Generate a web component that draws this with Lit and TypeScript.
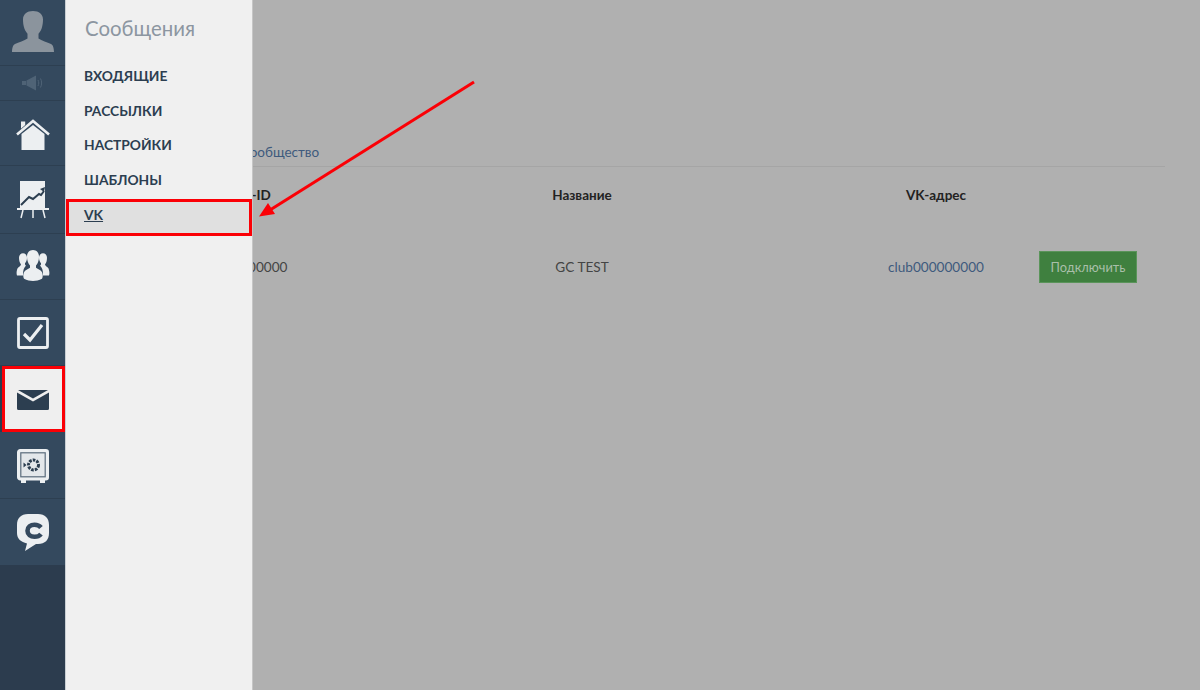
import { LitElement, html, css, svg } from "lit";
import { customElement } from "lit/decorators.js";

const FONT_ICON = {
  avatar: svg`<svg width="44" height="41" viewBox="0 0 44 44" preserveAspectRatio="none"><path fill="#8b949d" d="M22 0c-6 0-10 3.500-10 9 0 3 .4 6 1 8.500.5 2.500 2 5 3.500 7v5c-3 2.500-9 4-12.500 6-2 1.300-2.800 3.500-3 8.500h42c-.2-5-1-7.200-3-8.500-3.500-2-9.500-3.500-12.500-6v-5c1.500-2 3-4.500 3.500-7 .6-2.500 1-5.500 1-8.500 0-5.500-4-9-10-9z"/></svg>`,
  speaker: svg`<svg width="22" height="16" viewBox="0 0 22 16"><path fill="#4f6376" d="M0 6h4v4H0zM4.500 5.500 14 .5v15l-9.500-5z"/><path fill="none" stroke="#4f6376" d="M16 5c1 2 1 4 0 6M18.500 3.500c1.500 3 1.500 6 0 9"/></svg>`,
  home: svg`<svg width="34" height="32" viewBox="0 0 34 32"><path fill="#eceff1" d="M5.500 15 17 6l11.500 9v16h-23z"/><path fill="#eceff1" d="M5 2.500h4.200v3.500L5 9.800z"/><path fill="none" stroke="#eceff1" stroke-width="2.600" d="M1 15.500 17 2l16 13.500"/></svg>`,
  chart: svg`<svg width="34" height="38" viewBox="0 0 34 38"><rect x="4" y="0" width="25" height="27" fill="#eceff1"/><path fill="none" stroke="#2c3e50" stroke-width="2" d="M5 24l8-8 4 2 6-5 2 1 3-4"/><path fill="#2c3e50" d="M29 6l-1 5-4-3z"/><path fill="#eceff1" d="M1 27h32v2H1z"/><path fill="none" stroke="#eceff1" stroke-width="1.500" d="M7 29l-2 8M17 29v8M27 29l2 8"/></svg>`,
  people: svg`<svg width="34" height="31" viewBox="0 0 34 28" preserveAspectRatio="none"><path fill="#eceff1" d="M7 3a4 4 0 0 1 4 4c0 2-1 4-2 5 0 1 0 2 1 2-2 2-3 4-3 8v1H1c-1-2 0-6 1-7 1-1 3-2 3-3-1-1-2-3-2-6a4 4 0 0 1 4-4zM27 3a4 4 0 0 0-4 4c0 2 1 4 2 5 0 1 0 2-1 2 2 2 3 4 3 8v1h6c1-2 0-6-1-7-1-1-3-2-3-3 1-1 2-3 2-6a4 4 0 0 0-4-4z"/><path fill="#eceff1" d="M17 0c4 0 6 3 6 6 0 3-1 6-3 8v2c2 1.500 5 2 6 4 1 2 1 4 0 6-3 1.500-6 2-9 2s-6-.5-9-2c-1-2-1-4 0-6 1-2 4-2.500 6-4v-2c-2-2-3-5-3-8 0-3 2-6 6-6z"/></svg>`,
  check: svg`<svg width="32" height="32" viewBox="0 0 32 32"><rect x="1.500" y="1.500" width="29" height="29" rx="1.500" fill="none" stroke="#eceff1" stroke-width="2.800"/><path fill="none" stroke="#eceff1" stroke-width="3.200" d="M7 17l6 6L25 8"/></svg>`,
  mail: svg`<svg width="32" height="20" viewBox="0 0 32 20"><path fill="#2c3e50" d="M1 0h30l-15 8.500zM0 2.500l16 9 16-9V18.500a1.500 1.500 0 0 1-1.500 1.500H1.500A1.500 1.500 0 0 1 0 18.500z"/></svg>`,
  safe: svg`<svg width="32" height="34" viewBox="0 0 32 34"><rect x="1.200" y="1.200" width="29.600" height="29" rx="2" fill="#eceff1" stroke="#eceff1" stroke-width="2.400"/><rect x="3.800" y="3.800" width="24.400" height="24" fill="#e3e7ea" stroke="#5a6b7c" stroke-width="1.200"/><circle cx="16.500" cy="16" r="5" fill="none" stroke="#2c3e50" stroke-width="3" stroke-dasharray="2.600 1.100"/><path fill="#2c3e50" d="M6.500 13.500l3 2.500-3 2.500z"/><path fill="#eceff1" d="M4 31h5v3H4zM23 31h5v3h-5z"/></svg>`,
  chat: svg`<svg width="32" height="37" viewBox="0 0 32 37"><path fill="#eceff1" d="M11 0h10c7 0 11 4 11 11v8c0 7-4 11-11 11h-2l-11 7 2-7.500C4 28 0 25 0 19v-8C0 4 4 0 11 0z"/><path fill="none" stroke="#34495e" stroke-width="4.600" d="M24 13.500c-1.500-1.800-3.800-2.700-6.500-2.700-3.900 0-7 2.100-7 6s3.100 6 7 6c2.700 0 5-.9 6.500-2.700"/></svg>`,
};

@customElement("app-root")
export class AppRoot extends LitElement {
  static styles = css`
    :host {
      display: block;
      position: relative;
      width: 1200px;
      height: 690px;
      overflow: hidden;
      font-family: "Lato", "Open Sans", sans-serif;
      background: #b0b0b0;
    }
    .page { display: flex; height: 100%; }
    .rail {
      flex: 0 0 65px;
      display: flex;
      flex-direction: column;
      background: #2c3c4e;
    }
    .rail-item {
      display: flex;
      align-items: center;
      justify-content: center;
      background: #34495e;
      border-bottom: 1px solid #2d3f51;
      box-sizing: border-box;
    }
    .h-avatar { height: 66px; align-items: flex-end; padding-bottom: 13px; }
    .h-speaker { height: 35px; }
    .h-home { height: 65px; padding-top: 3px; }
    .h-chart { height: 68px; }
    .h-people { height: 66px; padding-bottom: 2px; }
    .h-check { height: 66px; }
    .h-mail { height: 66px; background: #efefef; border: 3px solid #fb0006; margin-left: 2px; padding-top: 1px; padding-right: 1px; }
    .h-safe { height: 67px; padding-top: 2px; }
    .h-chat { height: 66px; border-bottom: 0; }
    .main {
      flex: 1;
      padding: 144px 35px 0 108px;
      color: #252525;
      font-size: 14px;
    }
    .tabs {
      height: 22px;
      border-bottom: 1px solid #a5a5a5;
      color: #3e5a7d;
      font-size: 13.500px;
      line-height: 16px;
      margin-left: -12px;
    }
    .grid {
      display: grid;
      grid-template-columns: 158px 502px 206px 126px;
      align-items: center;
      justify-items: center;
    }
    .th { font-weight: 700; font-size: 13.500px; height: 56px; line-height: 56px; color: #222; }
    .td { height: 88px; line-height: 88px; color: #444; font-size: 13.600px; }
    .td.link { color: #3e5a7d; }
    .btn {
      justify-self: start;
      width: 98px;
      height: 32px;
      box-sizing: border-box;
      background: #3f803f;
      border: 1px solid #5a945a;
      color: #a9bfa9;
      font-size: 12.800px;
      line-height: 30px;
      text-align: center;
    }
    .panel {
      position: absolute;
      left: 65px;
      top: 0;
      bottom: 0;
      width: 186px;
      background: #f0f0f0;
      border-left: 1px solid #c8ced3;
      border-right: 1px solid #c6c6c6;
    }
    .panel h2 {
      margin: 0;
      padding: 16px 0 0 19px;
      height: 43px;
      font-size: 20.400px;
      line-height: 25px;
      font-weight: 400;
      color: #8c96a1;
    }
    .menu { display: flex; flex-direction: column; }
    .menu a {
      height: 34.500px;
      padding-left: 18px;
      font-size: 13.800px;
      line-height: 34px;
      font-weight: 700;
      color: #2c3e50;
    }
    .menu a.vk {
      margin-top: 2px;
      height: 37px;
      line-height: 25px;
      background: #e0e0e0;
      border: 3px solid #fb0006;
      box-sizing: border-box;
      padding-left: 15px;
      text-decoration: underline;
    }
    .arrow { position: absolute; left: 0; top: 0; pointer-events: none; }
  `;

  render() {
    return html`
      <div class="page">
        <nav class="rail">
          <div class="rail-item h-avatar">${FONT_ICON.avatar}</div>
          <div class="rail-item h-speaker">${FONT_ICON.speaker}</div>
          <div class="rail-item h-home">${FONT_ICON.home}</div>
          <div class="rail-item h-chart">${FONT_ICON.chart}</div>
          <div class="rail-item h-people">${FONT_ICON.people}</div>
          <div class="rail-item h-check">${FONT_ICON.check}</div>
          <div class="rail-item h-mail">${FONT_ICON.mail}</div>
          <div class="rail-item h-safe">${FONT_ICON.safe}</div>
          <div class="rail-item h-chat">${FONT_ICON.chat}</div>
        </nav>
        <main class="main">
          <div class="tabs">Подключить сообщество</div>
          <div class="grid">
            <div class="th">VK-ID</div>
            <div class="th">Название</div>
            <div class="th">VK-адрес</div>
            <div class="th"></div>
            <div class="td">000000000</div>
            <div class="td">GC TEST</div>
            <div class="td link">club000000000</div>
            <div class="btn">Подключить</div>
          </div>
        </main>
      </div>
      <aside class="panel">
        <h2>Сообщения</h2>
        <div class="menu">
          <a>ВХОДЯЩИЕ</a>
          <a>РАССЫЛКИ</a>
          <a>НАСТРОЙКИ</a>
          <a>ШАБЛОНЫ</a>
          <a class="vk">VK</a>
        </div>
      </aside>
      <svg class="arrow" width="1200" height="690" viewBox="0 0 1200 690">
        <path d="M474 82 270 210" stroke="#fb0006" stroke-width="3" fill="none"/>
        <path d="M259 216.500 268 203l7 11z" fill="#fb0006"/>
      </svg>
    `;
  }
}
